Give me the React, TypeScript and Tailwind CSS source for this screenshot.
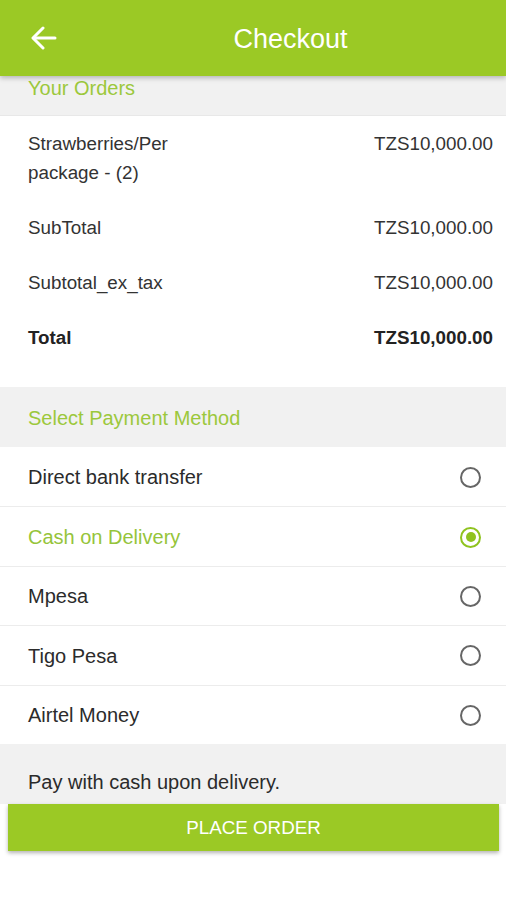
const green = "#9bc925";

function Radio({ checked }: { checked?: boolean }) {
  return checked ? (
    <span className="flex h-[21px] w-[21px] items-center justify-center rounded-full border-2 border-[#8fc31f]">
      <span className="h-[10px] w-[10px] rounded-full bg-[#8fc31f]" />
    </span>
  ) : (
    <span className="h-[21px] w-[21px] rounded-full border-2 border-[#666666]" />
  );
}

const orders = [
  { label: "Strawberries/Per package - (2)", value: "TZS10,000.00" },
  { label: "SubTotal", value: "TZS10,000.00" },
  { label: "Subtotal_ex_tax", value: "TZS10,000.00" },
  { label: "Total", value: "TZS10,000.00", bold: true },
];

const methods = [
  { name: "Direct bank transfer" },
  { name: "Cash on Delivery", checked: true },
  { name: "Mpesa" },
  { name: "Tigo Pesa" },
  { name: "Airtel Money" },
];

export default function App() {
  return (
    <div className="flex h-[900px] w-full flex-col overflow-hidden bg-white font-[family-name:'Liberation_Sans',Arial,sans-serif] text-[#333333]">
      {/* Toolbar */}
      <header
        className="relative z-10 flex h-[76px] shrink-0 items-center shadow-[0_2px_5px_rgba(0,0,0,0.25)]"
        style={{ backgroundColor: green }}
      >
        <div className="flex h-full w-[76px] items-center pl-[31px]">
          <svg width="26" height="24" viewBox="0 0 26 24" fill="none" stroke="white" strokeWidth="3" strokeLinecap="round" strokeLinejoin="round">
            <path d="M24 12H3" />
            <path d="M12 2 2 12l10 10" />
          </svg>
        </div>
        <h1 className="flex-1 pr-[1px] pt-[2px] text-center text-[27px] text-white">Checkout</h1>
      </header>

      {/* Your Orders */}
      <div className="h-[40px] shrink-0 border-b border-[#e8e8e8] bg-[#f1f1f1] px-[28px] text-[20px] leading-[24px] text-[#9cc83c]">
        Your Orders
      </div>
      <div className="flex shrink-0 flex-col gap-[26px] pb-[35px] pl-[28px] pr-[13px] pt-[13px] text-[18.8px] leading-[29px]">
        {orders.map((o) => (
          <div key={o.label} className={`flex justify-between ${o.bold ? "font-bold text-[#222222]" : ""}`}>
            <span className="w-[180px]">{o.label}</span>
            <span>{o.value}</span>
          </div>
        ))}
      </div>

      {/* Payment */}
      <div className="flex h-[60px] shrink-0 items-center bg-[#f1f1f1] px-[28px] pt-[1px] text-[20px] text-[#9cc83c]">
        Select Payment Method
      </div>
      <div className="flex shrink-0 flex-col">
        {methods.map((m, i) => (
          <div
            key={m.name}
            className={`flex h-[59.4px] items-center justify-between pl-[28px] pr-[25px] pt-[1px] text-[20px] ${
              i > 0 ? "border-t border-[#ececec]" : ""
            } ${m.checked ? "text-[#95c43a]" : "text-[#2b2b2b]"}`}
          >
            <span>{m.name}</span>
            <Radio checked={m.checked} />
          </div>
        ))}
      </div>
      <div className="flex h-[60px] shrink-0 items-center bg-[#f1f1f1] px-[28px] pt-[16px] text-[20px] text-[#2b2b2b]">
        Pay with cash upon delivery.
      </div>

      {/* Footer */}
      <div className="shrink-0 px-[8px]">
        <button
          className="flex h-[47px] w-[491px] items-center justify-center pt-[2px] text-[18.8px] text-white shadow-[0_2px_4px_rgba(0,0,0,0.3)]"
          style={{ backgroundColor: green }}
        >
          PLACE ORDER
        </button>
      </div>
    </div>
  );
}
